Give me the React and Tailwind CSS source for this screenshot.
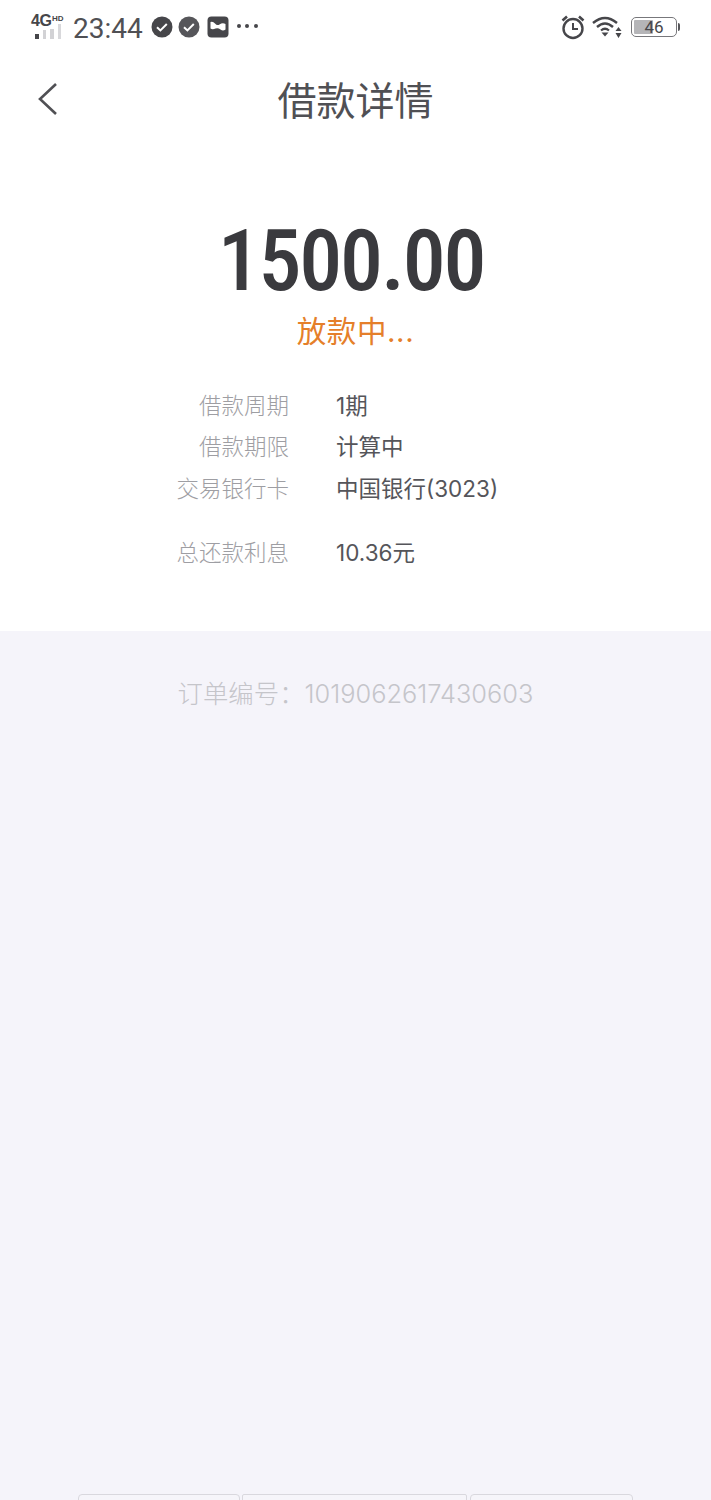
import React from "react";

const cjk = { fontFamily: '"Inter","Noto Sans CJK SC",sans-serif' };

function Row({ label, value, className = "" }) {
  return (
    <div className={`flex items-center h-[41.7px] ${className}`}>
      <div className="w-[289px] text-right text-[22.5px] font-light text-[#9e9ea3] leading-none">{label}</div>
      <div className="ml-[47px] text-[22.5px] font-normal text-[#55555a] leading-none">{value}</div>
    </div>
  );
}

function Check({ fill = "#46464a" }) {
  return (
    <svg width="22" height="22" viewBox="0 0 22 22">
      <circle cx="11" cy="11" r="10.5" fill={fill} />
      <path d="M6 11.2l3.4 3.2 6.4-6.4" fill="none" stroke="#fff" strokeWidth="2" />
    </svg>
  );
}

function StatusBar() {
  return (
    <div className="h-[52px] flex items-center justify-between pl-[31px] pr-[31px] text-[#46464a]">
      <div className="flex items-center">
        <div className="relative w-[34px] h-[28px]">
          <span className="absolute left-0 top-0 text-[16px] font-bold leading-[18px] tracking-[-0.5px]" style={{ fontFamily: '"Liberation Sans",sans-serif' }}>4G</span>
          <span className="absolute left-[21px] top-[2px] text-[8px] font-bold leading-[10px]" style={{ fontFamily: '"Liberation Sans",sans-serif' }}>HD</span>
          <div className="absolute left-[4px] bottom-[1px] flex items-end gap-[4px]">
            <div className="w-[3.5px] h-[5px] bg-[#46464a]" />
            <div className="w-[3.5px] h-[9px] bg-[#d2d2d5]" />
            <div className="w-[3.5px] h-[10px] bg-[#d2d2d5]" />
            <div className="w-[3.5px] h-[15px] bg-[#d8d8db]" />
          </div>
        </div>
        <span className="ml-[8px] text-[28px] leading-none text-[#505054] mt-[6px]" style={{ fontFamily: '"Roboto",sans-serif' }}>23:44</span>
        <div className="ml-[8px] flex items-center gap-[5px] mt-[1px]">
          <Check />
          <Check fill="#56565a" />
          <svg className="ml-[2px]" width="22" height="22" viewBox="0 0 22 22">
            <rect x="0.5" y="0.5" width="21" height="21" rx="4" fill="#46464a" />
            <path d="M3.5 6 Q6 5 8 7.5 Q10 10 12.5 8.5 Q15.5 6.5 18.5 8 V13.5 Q16 15.5 13.5 13.5 Q11 11.5 8.5 12.5 Q5.5 14 3.5 12.5 Z" fill="#fff" />
          </svg>
        </div>
        <div className="ml-[8px] flex items-center gap-[4.5px]">
          <div className="w-[4px] h-[4px] rounded-full bg-[#46464a]" />
          <div className="w-[4px] h-[4px] rounded-full bg-[#46464a]" />
          <div className="w-[4px] h-[4px] rounded-full bg-[#46464a]" />
        </div>
      </div>
      <div className="flex items-center mt-[2px]">
        <svg width="24" height="26" viewBox="0 0 24 26" fill="none" stroke="#46464a">
          <circle cx="12" cy="14.5" r="9.5" strokeWidth="2.4" />
          <path d="M12 9v6h5" strokeWidth="2" />
          <path d="M1.5 6.5 L6 2.5 M22.5 6.5 L18 2.5" strokeWidth="2.6" />
        </svg>
        <svg className="ml-[7px]" width="31" height="24" viewBox="0 0 31 24" fill="none" stroke="#46464a">
          <path d="M1 8 Q13 -2 25 8" strokeWidth="2.4" />
          <path d="M5 12 Q13 5 21 12" strokeWidth="2.4" />
          <path d="M9 15.5 Q13 12 17 15.5" strokeWidth="2.2" />
          <path d="M9.5 17.5 L16.5 17.5 L13 21.5 Z" fill="#46464a" stroke="none" />
          <path d="M26.5 12 L29.5 16 H23.5 Z M26.5 23 L29.5 18 H23.5 Z" fill="#46464a" stroke="none" />
        </svg>
        <div className="ml-[8px] relative w-[46px] h-[20px] rounded-[5px] border-[1.5px] border-[#77777b] p-[2px]">
          <div className="h-full w-[48%] bg-[#b5b5b8] rounded-[1px]" />
          <span className="absolute inset-0 flex items-center justify-center text-[17px] leading-none text-[#46464a]" style={{ fontFamily: '"Roboto",sans-serif' }}>46</span>
        </div>
        <div className="w-[2px] h-[8px] bg-[#56565a] ml-[1px] rounded-r-sm" />
      </div>
    </div>
  );
}

export default function App() {
  return (
    <div className="w-[711px] h-[1500px] bg-[#f5f4fa] flex flex-col overflow-hidden relative" style={cjk}>
      <div className="bg-white h-[631px] flex flex-col">
        <StatusBar />
        <div className="relative h-[96px] flex items-center justify-center">
          <svg className="absolute left-[37px] top-[29px]" width="22" height="36" viewBox="0 0 22 36" fill="none" stroke="#505054" strokeWidth="2.6">
            <path d="M19 3 L3 18 L19 33" />
          </svg>
          <span className="text-[39px] leading-none text-[#505054] font-normal">借款详情</span>
        </div>
        <div className="mt-[63px] mr-[9px] text-center text-[86px] leading-[100px] font-medium tracking-[-2.2px] text-[#3a3a3e]" style={{ fontFamily: '"Liberation Sans Narrow","Roboto Condensed","Liberation Sans",sans-serif' }}>1500.00</div>
        <div className="mt-[-2px] text-center text-[29.5px] leading-[44px] font-normal text-[#e57f2a] tracking-[0.6px]">放款中...</div>
        <div className="mt-[32px]">
          <Row label="借款周期" value="1期" />
          <Row label="借款期限" value="计算中" />
          <Row label="交易银行卡" value="中国银行(3023)" />
          <Row label="总还款利息" value="10.36元" className="mt-[22px]" />
        </div>
      </div>
      <div className="mt-[46px] text-center text-[25.4px] leading-[34px] font-light text-[#c5c5ca]">订单编号：1019062617430603</div>
      <div className="absolute left-[78px] top-[1494px] flex">
        <div className="w-[162px] h-[20px] rounded-t-[4px] border border-[#d9d8de] bg-[#f6f5fa]" />
        <div className="ml-[2px] w-[225px] h-[20px] rounded-t-[2px] border border-[#d9d8de] bg-[#f6f5fa]" />
        <div className="ml-[3px] w-[163px] h-[20px] rounded-t-[4px] border border-[#d9d8de] bg-[#f6f5fa]" />
      </div>
    </div>
  );
}
